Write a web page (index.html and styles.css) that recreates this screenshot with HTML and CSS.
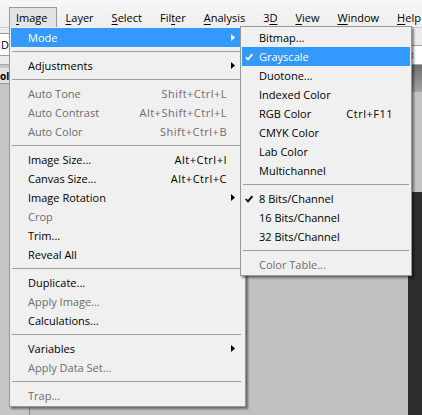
FILE: index.html
```html
<!DOCTYPE html>
<html>
<head>
<meta charset="utf-8">
<title>Image menu</title>
<link rel="stylesheet" href="styles.css">
</head>
<body>
<div class="app">
  <nav class="menubar">
    <span class="mb-item active"><u>I</u>mage</span>
    <span class="mb-item"><u>L</u>ayer</span>
    <span class="mb-item"><u>S</u>elect</span>
    <span class="mb-item">Fil<u>t</u>er</span>
    <span class="mb-item"><u>A</u>nalysis</span>
    <span class="mb-item">3<u>D</u></span>
    <span class="mb-item"><u>V</u>iew</span>
    <span class="mb-item"><u>W</u>indow</span>
    <span class="mb-item"><u>H</u>elp</span>
  </nav>
  <div class="options">
    <div class="opt-field">D</div>
    <div class="opt-spin">&#8661;</div>
  </div>
  <div class="workspace">
    <div class="panel-left"><span class="panel-title">olu</span></div>
    <div class="doc-col">
      <div class="tabstrip"></div>
      <div class="doc-row">
        <div class="canvas-area"></div>
        <div class="panel-right"><div class="panel-right-top"></div><div class="panel-right-dark"></div></div>
      </div>
    </div>
  </div>

  <ul class="menu main">
    <li class="item hl"><span class="mark"></span><span class="label">Mode</span><svg class="arrow" viewBox="0 0 4 7"><polygon points="0,0 4,3.5 0,7"/></svg></li>
    <li class="sep"></li>
    <li class="item"><span class="mark"></span><span class="label">Adjustments</span><svg class="arrow" viewBox="0 0 4 7"><polygon points="0,0 4,3.5 0,7"/></svg></li>
    <li class="sep"></li>
    <li class="item off"><span class="mark"></span><span class="label">Auto Tone</span><span class="key">Shift+Ctrl+L</span></li>
    <li class="item off"><span class="mark"></span><span class="label">Auto Contrast</span><span class="key">Alt+Shift+Ctrl+L</span></li>
    <li class="item off"><span class="mark"></span><span class="label">Auto Color</span><span class="key">Shift+Ctrl+B</span></li>
    <li class="sep"></li>
    <li class="item"><span class="mark"></span><span class="label">Image Size...</span><span class="key">Alt+Ctrl+I</span></li>
    <li class="item"><span class="mark"></span><span class="label">Canvas Size...</span><span class="key">Alt+Ctrl+C</span></li>
    <li class="item"><span class="mark"></span><span class="label">Image Rotation</span><svg class="arrow" viewBox="0 0 4 7"><polygon points="0,0 4,3.5 0,7"/></svg></li>
    <li class="item off"><span class="mark"></span><span class="label">Crop</span></li>
    <li class="item"><span class="mark"></span><span class="label">Trim...</span></li>
    <li class="item"><span class="mark"></span><span class="label">Reveal All</span></li>
    <li class="sep"></li>
    <li class="item"><span class="mark"></span><span class="label">Duplicate...</span></li>
    <li class="item off"><span class="mark"></span><span class="label">Apply Image...</span></li>
    <li class="item"><span class="mark"></span><span class="label">Calculations...</span></li>
    <li class="sep"></li>
    <li class="item"><span class="mark"></span><span class="label">Variables</span><svg class="arrow" viewBox="0 0 4 7"><polygon points="0,0 4,3.5 0,7"/></svg></li>
    <li class="item off"><span class="mark"></span><span class="label">Apply Data Set...</span></li>
    <li class="sep"></li>
    <li class="item off"><span class="mark"></span><span class="label">Trap...</span></li>
  </ul>

  <ul class="menu sub">
    <li class="item"><span class="mark"></span><span class="label">Bitmap...</span></li>
    <li class="item hl"><span class="mark"><svg class="check" viewBox="0 0 8 8"><polyline points="0.8,4 3,6.4 7.4,1.2"/></svg></span><span class="label">Grayscale</span></li>
    <li class="item"><span class="mark"></span><span class="label">Duotone...</span></li>
    <li class="item"><span class="mark"></span><span class="label">Indexed Color</span></li>
    <li class="item"><span class="mark"></span><span class="label">RGB Color</span><span class="key">Ctrl+F11</span></li>
    <li class="item"><span class="mark"></span><span class="label">CMYK Color</span></li>
    <li class="item"><span class="mark"></span><span class="label">Lab Color</span></li>
    <li class="item"><span class="mark"></span><span class="label">Multichannel</span></li>
    <li class="sep"></li>
    <li class="item"><span class="mark"><svg class="check" viewBox="0 0 8 8"><polyline points="0.8,4 3,6.4 7.4,1.2"/></svg></span><span class="label">8 Bits/Channel</span></li>
    <li class="item"><span class="mark"></span><span class="label">16 Bits/Channel</span></li>
    <li class="item"><span class="mark"></span><span class="label">32 Bits/Channel</span></li>
    <li class="sep"></li>
    <li class="item off"><span class="mark"></span><span class="label">Color Table...</span></li>
  </ul>
</div>
</body>
</html>
```

FILE: styles.css
```css
* { box-sizing: border-box; }

body {
  margin: 0;
  width: 422px;
  height: 415px;
  overflow: hidden;
  font-family: "Open Sans", "Noto Sans", sans-serif;
  font-size: 11px;
  color: #000;
}

.app {
  position: relative;
  width: 422px;
  height: 415px;
  display: flex;
  flex-direction: column;
  background: #c0c0c0;
  overflow: hidden;
}

/* ---- menu bar ---- */
.menubar {
  height: 27px;
  flex: none;
  display: flex;
  align-items: flex-end;
  gap: 2px;
  padding-left: 9px;
  background: linear-gradient(#f7f7f7, #eeeeee);
  white-space: nowrap;
  overflow: hidden;
}

.mb-item {
  height: 20px;
  line-height: 19px;
  padding: 0 8px 0 6px;
  border: 1px solid transparent;
  border-bottom: 0;
  flex: none;
}

.mb-item.active {
  background: #e3e3e3;
  border-color: #9a9a9a;
}

.mb-item u { text-decoration-thickness: 1px; text-underline-offset: 2px; }

/* ---- options bar ---- */
.options {
  height: 38px;
  flex: none;
  display: flex;
  justify-content: space-between;
  align-items: flex-start;
  background: #ececec;
  border-top: 1px solid #d0d0d0;
  border-bottom: 1px solid #a8a8a8;
}

.opt-field {
  margin-top: 5px;
  width: 40px;
  height: 23px;
  background: #fff;
  border: 1px solid #9c9c9c;
  border-left: 0;
  padding-left: 1px;
  line-height: 21px;
}

.opt-spin {
  margin-top: 17px;
  width: 16px;
  height: 20px;
  background: #fff;
  border: 1px solid #a5a5a5;
  border-right: 0;
  font-size: 10px;
  line-height: 18px;
  color: #555;
}

/* ---- workspace ---- */
.workspace {
  flex: 1;
  display: flex;
  min-height: 0;
}

.panel-left {
  width: 30px;
  flex: none;
  background: #c6c6c6;
  border-right: 1px solid #888;
}

.panel-title {
  display: block;
  height: 16px;
  line-height: 16px;
  font-weight: bold;
  font-size: 10px;
  margin-top: 3px;
  background: #e2e2e2;
  border-bottom: 1px solid #999;
}

.doc-col {
  flex: 1;
  display: flex;
  flex-direction: column;
}

.tabstrip {
  height: 27px;
  flex: none;
  background: linear-gradient(#6e6e6e, #a5a5a5);
}

.doc-row {
  flex: 1;
  display: flex;
}

.canvas-area {
  flex: 1;
  background: #c0c0c0;
}

.panel-right {
  width: 14px;
  flex: none;
  display: flex;
  flex-direction: column;
}

.panel-right-top {
  height: 100px;
  background: #c4c4c4;
}

.panel-right-dark {
  flex: 1;
  background: #2c2c2c;
}

/* ---- dropdown menus ---- */
.menu {
  position: absolute;
  margin: 0;
  list-style: none;
  background: #f0f0f0;
  border: 1px solid #979797;
  padding: 0 1px 1px;
  box-shadow: 2px 2px 2px rgba(0, 0, 0, 0.45);
  white-space: nowrap;
}

.menu.main {
  left: 9px;
  top: 27px;
  width: 237px;
  border-top: 0;
  padding-top: 1px;
}

.menu.sub {
  left: 240px;
  top: 26px;
  width: 172px;
  padding-top: 1px;
}

.item {
  display: flex;
  align-items: center;
  height: 19px;
  padding: 0 9px 0 3px;
  line-height: 19px;
}

.mark {
  width: 14px;
  flex: none;
  display: flex;
  align-items: center;
}

.label { flex: 1; }

.key {
  margin-right: 8px;
  letter-spacing: 0.5px;
}

.arrow {
  width: 4px;
  height: 7px;
  flex: none;
  fill: #000;
}

.check {
  width: 8px;
  height: 8px;
  fill: none;
  stroke: #000;
  stroke-width: 1.8;
}

.item.off { color: #6d6d6d; }

.item.hl {
  background: #3399ff;
  color: #fff;
}

.item.hl .arrow { fill: #fff; }
.item.hl .check { stroke: #fff; }

.sep {
  height: 0;
  border-top: 1px solid #a0a0a0;
  margin: 4px 3px 4px 1px;
}

.menu.sub .sep { margin: 4px 1px; }
```
